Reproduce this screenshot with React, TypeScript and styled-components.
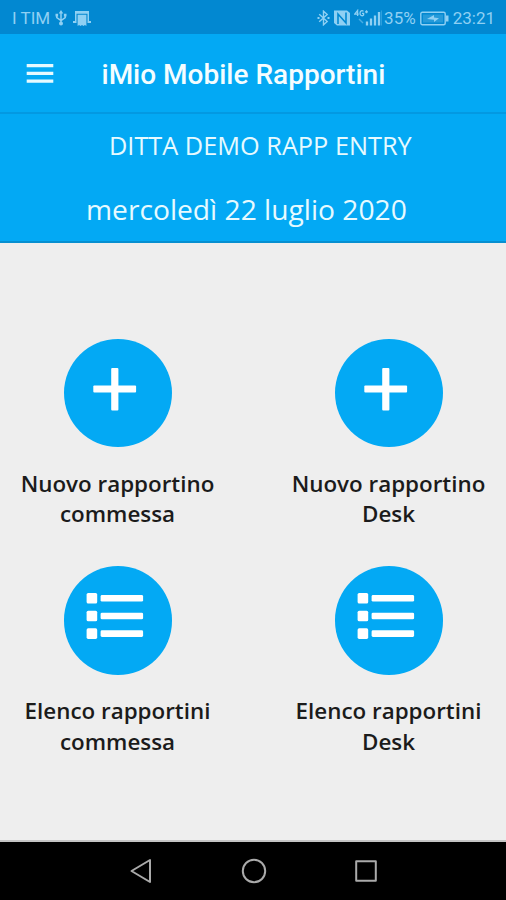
import React from "react";
import styled, { createGlobalStyle } from "styled-components";

const GlobalStyle = createGlobalStyle`
  *, *::before, *::after { box-sizing: border-box; }
  body { margin: 0; background: #eeeeee; }
`;

const Screen = styled.div`
  display: flex;
  flex-direction: column;
  width: 506px;
  height: 900px;
  overflow: hidden;
  background: #eeeeee;
  font-family: "Open Sans", sans-serif;
`;

const StatusBar = styled.div`
  display: flex;
  align-items: center;
  justify-content: space-between;
  flex: none;
  height: 34px;
  padding: 2px 11px 0 12px;
  background: #0288d1;
  color: #8fd0f3;
  font-family: Roboto, sans-serif;
  font-size: 17px;
  line-height: 20px;
`;

const StatusGroup = styled.div`
  display: flex;
  align-items: center;
`;

const StatusText = styled.span<{ $left?: number }>`
  margin-left: ${(p) => p.$left ?? 0}px;
  white-space: nowrap;
`;

const StatusIcon = styled.svg<{ $left?: number }>`
  display: block;
  flex: none;
  margin-left: ${(p) => p.$left ?? 0}px;
`;

const AppBar = styled.header`
  display: flex;
  align-items: center;
  flex: none;
  height: 80px;
  padding: 1px 0 0 26px;
  background: #03a9f4;
  border-bottom: 2px solid #0399e2;
`;

const MenuButton = styled.button`
  display: flex;
  width: 28px;
  height: 20px;
  padding: 0;
  border: 0;
  background: none;
`;

const Title = styled.h1`
  margin: 3px 0 0 47.5px;
  color: #f4fdff;
  font: 500 28px/32px Roboto, sans-serif;
  white-space: nowrap;
`;

const Banner = styled.section`
  display: flex;
  flex-direction: column;
  flex: none;
  height: 129px;
  background: #03a9f4;
  border-bottom: 2px solid #078fd0;
  color: #e6faff;
`;

const Company = styled.div`
  margin: 13px 0 0 109px;
  font-size: 25.3px;
  line-height: 36px;
  white-space: nowrap;
`;

const Today = styled.div`
  margin: 26px 0 0 86px;
  font-size: 28.2px;
  line-height: 40px;
  white-space: nowrap;
`;

const Actions = styled.main`
  display: grid;
  grid-template-columns: 235px 235px;
  grid-auto-rows: 227.5px;
  column-gap: 36px;
  flex: 1;
  padding-top: 95.5px;
  border-bottom: 2px solid #c4c4c4;
`;

const Action = styled.button`
  display: flex;
  flex-direction: column;
  align-items: center;
  padding: 0;
  border: 0;
  background: none;
  font-family: inherit;
`;

const Disc = styled.span`
  display: flex;
  width: 108.5px;
  height: 108.5px;
  flex: none;
  margin-left: 1px;
  border-radius: 50%;
  background: #03a9f4;
`;

const Label = styled.span`
  display: flex;
  flex-direction: column;
  align-items: center;
  margin-top: 21.6px;
  color: #1b1b1b;
  font-size: 22.4px;
  font-weight: 600;
  line-height: 30.5px;
  white-space: nowrap;
`;

const NavBar = styled.nav`
  display: flex;
  align-items: center;
  justify-content: space-between;
  flex: none;
  height: 58px;
  padding: 0 128px 0 129px;
  background: #000;
`;

const NavIcon = styled.svg`
  display: block;
  fill: none;
  stroke: #aaa;
  stroke-width: 2;
  stroke-linejoin: round;
`;

function PlusGlyph() {
  return (
    <svg width="108.5" height="108.5" viewBox="0 0 108.5 108.5" fill="#fff">
      <rect x="29.3" y="46.6" width="42.8" height="7" rx="1" />
      <rect x="47.2" y="29" width="7.2" height="42.5" rx="1" />
    </svg>
  );
}

function ListGlyph() {
  return (
    <svg width="108.5" height="108.5" viewBox="0 0 108.5 108.5" fill="#fff">
      {[27, 44.7, 62.3].map((y) => (
        <g key={y}>
          <rect x="22.6" y={y} width="10.6" height="10.6" rx="1.6" />
          <rect x="36.6" y={y + 2} width="42.5" height="6.6" rx="1.4" />
        </g>
      ))}
    </svg>
  );
}

const actions = [
  { glyph: "plus", lines: ["Nuovo rapportino", "commessa"] },
  { glyph: "plus", lines: ["Nuovo rapportino", "Desk"] },
  { glyph: "list", lines: ["Elenco rapportini", "commessa"] },
  { glyph: "list", lines: ["Elenco rapportini", "Desk"] },
];

export default function App() {
  return (
    <Screen>
      <GlobalStyle />
      <StatusBar>
        <StatusGroup>
          <StatusText>I TIM</StatusText>
          <StatusIcon $left={5} width="12" height="16" viewBox="0 0 12 16" fill="none" stroke="currentColor" strokeWidth="1.5">
            <path d="M6 3v10M1.8 5v2.5L6 10.5l4.2-3V5" />
            <path d="M6 0l2.3 3.5H3.7zM.5 3.8h2.6v2.6H.5zM8.9 3.8h2.6v2.6H8.9z" fill="currentColor" stroke="none" />
            <circle cx="6" cy="13.5" r="2" fill="currentColor" stroke="none" />
          </StatusIcon>
          <StatusIcon $left={6} width="18" height="17" viewBox="0 0 18 17" fill="currentColor">
            <path d="M2 1h14v10h2v2h-3.5V3.8h-11V13H0v-2h2z" />
            <path d="M4.6 4.8h8.8V16l-1.5-1-1.4 1L9 15l-1.5 1-1.4-1-1.5 1z" />
          </StatusIcon>
        </StatusGroup>
        <StatusGroup>
          <StatusIcon width="13" height="16" viewBox="0 0 13 16" fill="none" stroke="currentColor" strokeWidth="1.4">
            <path d="M2.2 4.2l8 7.3-3.7 3.3V1.2l3.7 3.3-8 7.3" />
            <path d="M.5 8h2M10.5 8h2" strokeWidth="1.8" />
          </StatusIcon>
          <StatusIcon $left={4.5} width="16" height="16" viewBox="0 0 16 16">
            <path d="M0 .5h13L16 3v12.5H3L0 13z" fill="currentColor" />
            <path d="M4 14V4l8 9V2.5" fill="none" stroke="#0288d1" strokeWidth="1.6" />
          </StatusIcon>
          <StatusIcon $left={3.5} width="28" height="18" viewBox="0 0 28 18" fill="none" stroke="currentColor">
            <path d="M3.6 7V1.5L.7 5.2h4M9.5 2.4C8 .8 6 2 6 4.2s2 3.4 3.6 1.8V4.4H8M11 2.8h3M12.5 1.3v3" strokeWidth="1.3" />
            <path d="M5 10l4 4" strokeWidth="1.5" opacity=".5" />
            <path d="M13 16.5v-4M17 16.5v-7M21 16.5v-10M25 16.5V3" strokeWidth="2.3" />
            <path d="M27.4 16.5v-15" strokeWidth=".7" opacity=".5" />
          </StatusIcon>
          <StatusText $left={2.5}>35%</StatusText>
          <StatusIcon $left={4.5} width="29" height="15" viewBox="0 0 29 15">
            <rect x=".8" y="1.3" width="24.4" height="12.4" rx="1.5" fill="none" stroke="currentColor" strokeWidth="1.4" />
            <rect x="3" y="3.5" width="20" height="8" fill="currentColor" opacity=".25" />
            <path d="M7 8l7-4v2.5l5 .8-5 3.8V8.8z" fill="currentColor" />
            <path d="M26 4.5h2.5v6H26z" fill="currentColor" />
          </StatusIcon>
          <StatusText $left={3.5}>23:21</StatusText>
        </StatusGroup>
      </StatusBar>

      <AppBar>
        <MenuButton aria-label="Menu">
          <svg width="28" height="20" viewBox="0 0 28 20" fill="#e6faff">
            <path d="M.7 0h26.6v3.2H.7zM.7 7.8h26.6V11H.7zM.7 15.6h26.6v3.2H.7z" />
          </svg>
        </MenuButton>
        <Title>iMio Mobile Rapportini</Title>
      </AppBar>

      <Banner>
        <Company>DITTA DEMO RAPP ENTRY</Company>
        <Today>mercoledì 22 luglio 2020</Today>
      </Banner>

      <Actions>
        {actions.map(({ glyph, lines }) => (
          <Action key={lines.join(" ")}>
            <Disc>{glyph === "plus" ? <PlusGlyph /> : <ListGlyph />}</Disc>
            <Label>
              {lines.map((line) => (
                <span key={line}>{line}</span>
              ))}
            </Label>
          </Action>
        ))}
      </Actions>

      <NavBar>
        <NavIcon width="24" height="26" viewBox="0 0 24 26">
          <path d="M21 2v22L2.5 13z" />
        </NavIcon>
        <NavIcon width="26" height="26" viewBox="0 0 26 26">
          <circle cx="13" cy="13" r="11.2" />
        </NavIcon>
        <NavIcon width="24" height="24" viewBox="0 0 24 24">
          <rect x="2.2" y="2.2" width="19.6" height="19.6" />
        </NavIcon>
      </NavBar>
    </Screen>
  );
}
